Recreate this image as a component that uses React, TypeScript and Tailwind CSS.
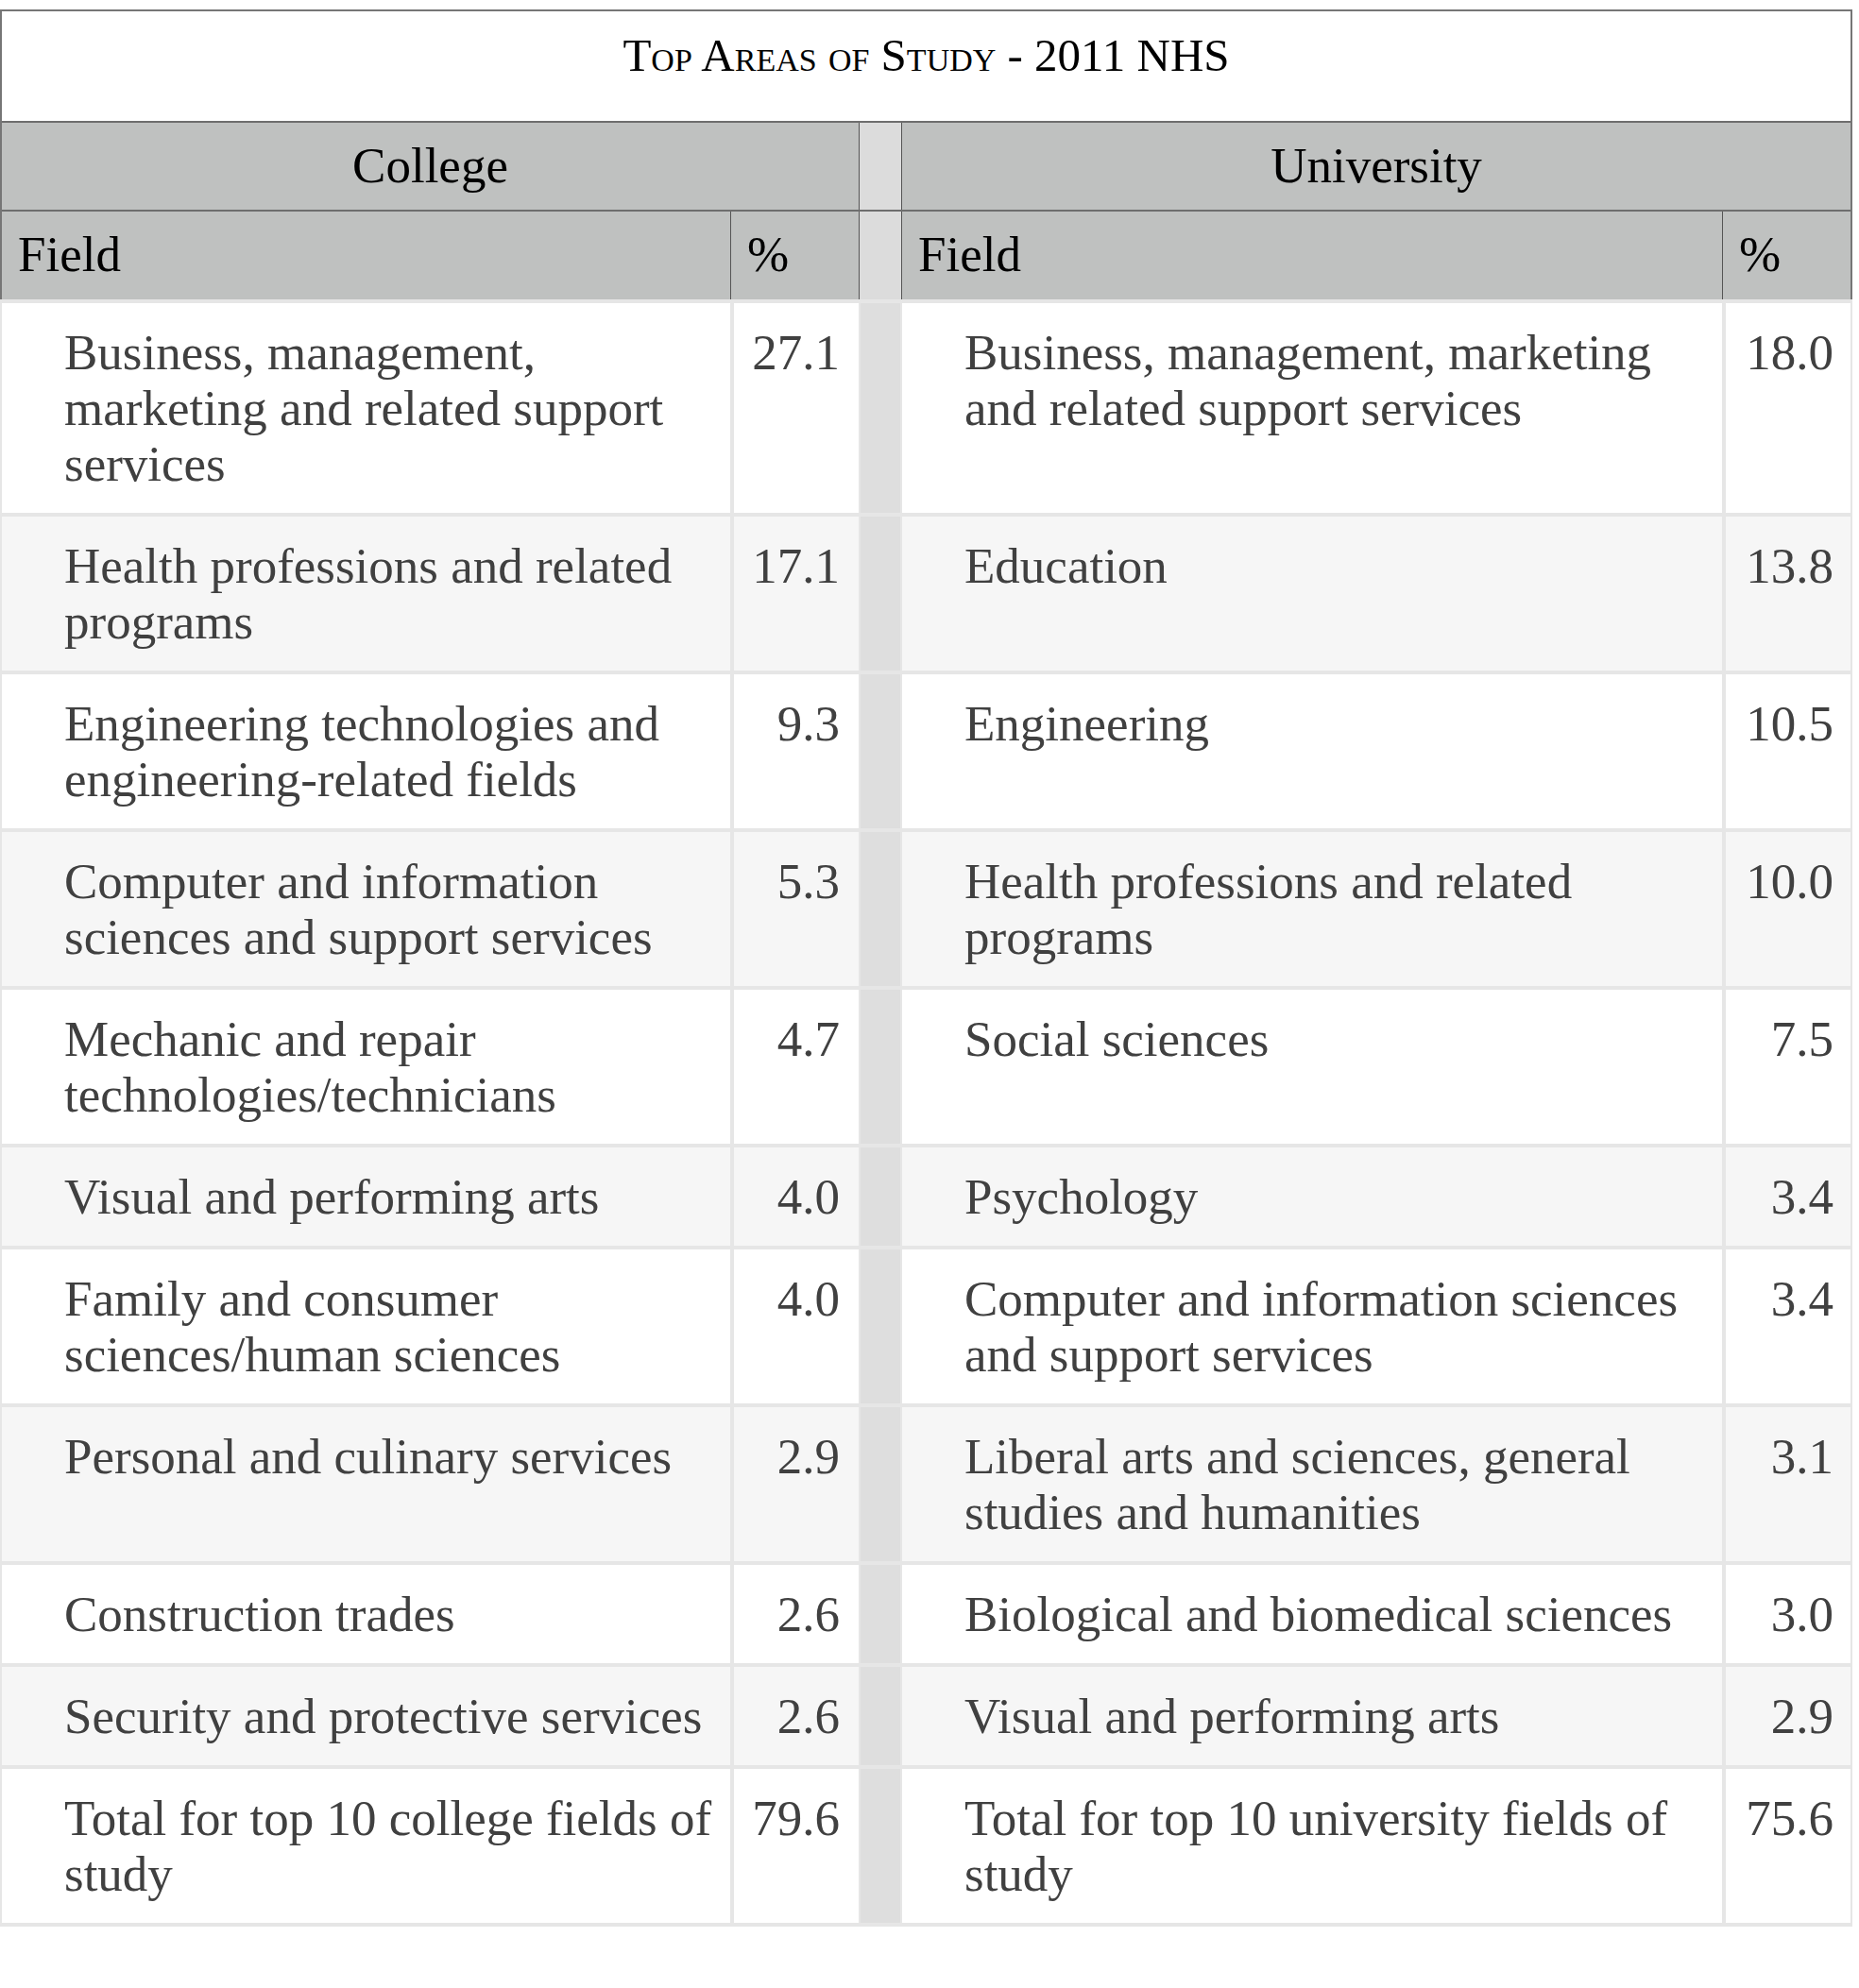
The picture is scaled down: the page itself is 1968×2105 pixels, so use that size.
const college: [string, string][] = [
  ["Business, management, marketing and related support services", "27.1"],
  ["Health professions and related programs", "17.1"],
  ["Engineering technologies and engineering-related fields", "9.3"],
  ["Computer and information sciences and support services", "5.3"],
  ["Mechanic and repair technologies/technicians", "4.7"],
  ["Visual and performing arts", "4.0"],
  ["Family and consumer sciences/human sciences", "4.0"],
  ["Personal and culinary services", "2.9"],
  ["Construction trades", "2.6"],
  ["Security and protective services", "2.6"],
  ["Total for top 10 college fields of study", "79.6"],
];

const university: [string, string][] = [
  ["Business, management, marketing and related support services", "18.0"],
  ["Education", "13.8"],
  ["Engineering", "10.5"],
  ["Health professions and related programs", "10.0"],
  ["Social sciences", "7.5"],
  ["Psychology", "3.4"],
  ["Computer and information sciences and support services", "3.4"],
  ["Liberal arts and sciences, general studies and humanities", "3.1"],
  ["Biological and biomedical sciences", "3.0"],
  ["Visual and performing arts", "2.9"],
  ["Total for top 10 university fields of study", "75.6"],
];

const cols = "grid grid-cols-[771px_136px_46px_868px_136px]";

export default function App() {
  return (
    <div className="min-h-screen bg-white pt-[10px] font-['Liberation_Serif',serif] text-[53px] leading-[59px]">
      <div className="w-[1961px] border-x-2 border-t-2 border-[#767676] text-black">
        <div className="h-[116px] pt-[17px] text-center text-[49px] [font-variant:small-caps]">
          Top Areas of Study - 2011 NHS
        </div>
        <div className={`${cols} h-[94px] border-t-2 border-[#6e6e6e] bg-[#bfc1c0]`}>
          <div className="col-span-2 pt-[16px] text-center">College</div>
          <div className="border-x border-[#555] bg-[#dcdcdc]" />
          <div className="col-span-2 pt-[16px] text-center">University</div>
        </div>
        <div className={`${cols} h-[95px] border-t-2 border-[#6e6e6e] bg-[#bfc1c0]`}>
          <div className="pl-[17px] pt-[16px]">Field</div>
          <div className="border-l border-[#555] pl-[17px] pt-[16px]">%</div>
          <div className="border-x border-[#555] bg-[#dcdcdc]" />
          <div className="pl-[17px] pt-[16px]">Field</div>
          <div className="border-l border-[#555] pl-[17px] pt-[16px]">%</div>
        </div>
      </div>
      <div className="w-[1961px] border-x-2 border-t-4 border-[#e6e6e6] text-[#404040]">
        {college.map((c, i) => {
          const u = university[i];
          const bg = i % 2 === 1 ? "bg-[#f6f6f6]" : "bg-white";
          return (
            <div key={i} className={`${cols} border-b-4 border-[#e6e6e6] ${bg}`}>
              <div className="pl-[66px] pr-[18px] pt-[23px] pb-[22px]">{c[0]}</div>
              <div className="border-l-4 border-[#e6e6e6] pr-[20px] pt-[23px] text-right">{c[1]}</div>
              <div className="border-x-2 border-[#e6e6e6] bg-[#dedede]" />
              <div className="pl-[66px] pr-[18px] pt-[23px] pb-[22px]">{u[0]}</div>
              <div className="border-l-4 border-[#e6e6e6] pr-[18px] pt-[23px] text-right">{u[1]}</div>
            </div>
          );
        })}
      </div>
    </div>
  );
}
